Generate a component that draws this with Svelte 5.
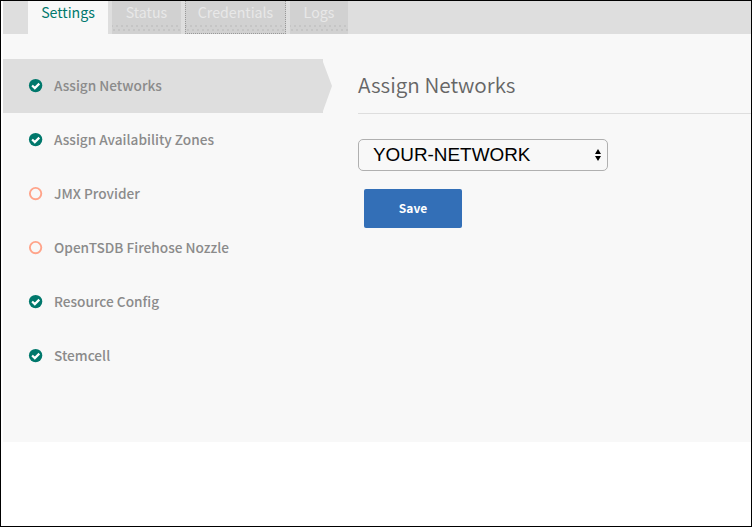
<script>
  const tabs = [
    { name: 'Settings', active: true, width: 80 },
    { name: 'Status', width: 69 },
    { name: 'Credentials', focused: true, width: 101 },
    { name: 'Logs', width: 58 }
  ];
  const steps = [
    { name: 'Assign Networks', done: true, current: true },
    { name: 'Assign Availability Zones', done: true },
    { name: 'JMX Provider', done: false },
    { name: 'OpenTSDB Firehose Nozzle', done: false },
    { name: 'Resource Config', done: true },
    { name: 'Stemcell', done: true }
  ];
</script>

<div class="frame">
  <nav class="tabs">
    {#each tabs as tab}
      <div class="tab" class:active={tab.active} class:focused={tab.focused} style="width: {tab.width}px">
        <span>{tab.name}</span>
      </div>
    {/each}
  </nav>
  <div class="body">
    <aside>
      {#each steps as step}
        <div class="step" class:current={step.current}>
          <svg width="14" height="14" viewBox="0 0 14 14">
            {#if step.done}
              <circle cx="6.6" cy="6.6" r="6.7" fill="#00786c" />
              <path d="M3.1 6.5 5.8 9.1 10.3 4.6" fill="none" stroke="#fff" stroke-width="2.2" />
            {:else}
              <circle cx="6.6" cy="6.6" r="5.7" fill="none" stroke="#ffa48a" stroke-width="1.9" />
            {/if}
          </svg>
          <span>{step.name}</span>
          {#if step.current}
            <svg class="arrow" width="9" height="54" viewBox="0 0 9 54"><path d="M0 3 9 27 0 52Z" fill="#dedede" /></svg>
          {/if}
        </div>
      {/each}
    </aside>
    <main>
      <h1>Assign Networks</h1>
      <div class="select">
        <span>YOUR-NETWORK</span>
        <svg width="6" height="12" viewBox="0 0 6 12"><path d="M3 0 6 5H0ZM0 7H6L3 12Z" fill="#000" /></svg>
      </div>
      <button>Save</button>
    </main>
  </div>
</div>

<style>
  .frame {
    box-sizing: border-box;
    width: 752px;
    height: 527px;
    padding-left: 2px;
    border: 1px solid #000;
    background: #fff;
    overflow: hidden;
    font-family: "Noto Sans CJK SC", "Noto Sans", sans-serif;
  }
  .tabs {
    display: flex;
    gap: 4px;
    height: 33px;
    padding-left: 25px;
    background: #dedede;
  }
  .tab {
    box-sizing: border-box;
    height: 33px;
    background: radial-gradient(circle at 2px 2px, #c4c4c4 0.7px, transparent 0.8px) 3px 23px / 5px 4px repeat-x,
      radial-gradient(circle at 2px 2px, #c4c4c4 0.7px, transparent 0.8px) 5px 27px / 5px 4px repeat-x, #d1d1d1;
    color: #e8e8e8;
    font-size: 14.2px;
    line-height: 22px;
    text-align: center;
    white-space: nowrap;
  }
  .active {
    background: #f8f8f8;
    color: #00786c;
  }
  .focused {
    border: 1px dotted #999;
    border-top: 0;
  }
  .body {
    display: flex;
    height: 408px;
    background: #f8f8f8;
  }
  aside {
    width: 329px;
    padding-top: 25px;
  }
  .step {
    box-sizing: border-box;
    position: relative;
    display: flex;
    align-items: center;
    gap: 11px;
    width: 320px;
    height: 54px;
    padding-left: 26px;
    color: #8b8b8b;
    font-size: 13.65px;
    font-weight: 500;
    white-space: nowrap;
  }
  .step svg {
    overflow: visible;
  }
  .step span {
    padding-bottom: 2px;
    line-height: 20px;
  }
  .current {
    background: #dedede;
  }
  .arrow {
    position: absolute;
    left: 320px;
    top: 0;
  }
  main {
    flex: 1;
    padding-left: 26px;
  }
  h1 {
    box-sizing: border-box;
    height: 80px;
    margin: 0;
    padding-top: 34px;
    border-bottom: 1px solid #dedede;
    color: #666;
    font-size: 20.7px;
    font-weight: 350;
    line-height: 32px;
  }
  .select {
    box-sizing: border-box;
    display: flex;
    align-items: center;
    justify-content: space-between;
    width: 250px;
    height: 32px;
    margin-top: 25px;
    padding: 0 6px 0 14px;
    border: 1px solid #b0b0b0;
    border-radius: 5px;
    color: #000;
    font: 18.9px "Liberation Sans", Arial, sans-serif;
  }
  button {
    display: block;
    width: 98px;
    height: 39px;
    margin: 18px 0 0 6px;
    padding: 0 0 2px;
    border: 0;
    border-radius: 2px;
    background: #336fb7;
    color: #fff;
    font: bold 12px "Noto Sans CJK SC", "Noto Sans", sans-serif;
  }
</style>
